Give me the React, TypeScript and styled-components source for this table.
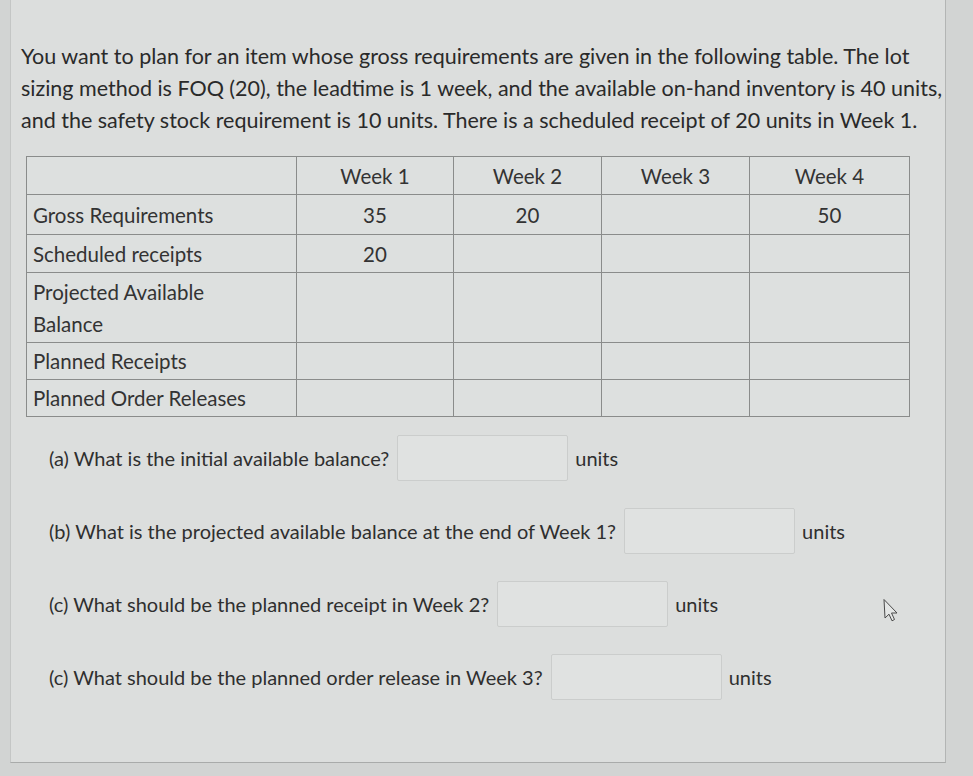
import styled, { createGlobalStyle } from "styled-components";

const GlobalStyle = createGlobalStyle`
  html, body {
    margin: 0;
    padding: 0;
    background: #d2d4d3;
  }
  body {
    font-family: Lato, "Open Sans", sans-serif;
    color: #2c2c2c;
  }
`;

const Page = styled.div`
  width: 973px;
  height: 776px;
  overflow: hidden;
  background: #d2d4d3;
`;

const Panel = styled.section`
  position: relative;
  box-sizing: border-box;
  margin-left: 10px;
  width: 936px;
  height: 763px;
  padding: 40px 0 0 10px;
  background: #dcdedd;
  border-right: 1px solid #b3b5b4;
  border-bottom: 1px solid #a9abaa;
  border-left: 1px solid #c4c6c5;
`;

const Intro = styled.p`
  margin: 0;
  font-size: 21.5px;
  line-height: 32px;
  white-space: nowrap;
  color: #2a2a2a;
`;

const Table = styled.table`
  margin: 20px 0 0 5px;
  border-collapse: collapse;
  font-size: 20.5px;
  color: #333;
  background: #dde0df;
`;

const Cell = styled.td<{ $w?: number; $h?: number; $label?: boolean }>`
  width: ${(p) => (p.$w ? `${p.$w}px` : "auto")};
  height: ${(p) => (p.$h ? `${p.$h}px` : "auto")};
  box-sizing: border-box;
  border: 1px solid #8a8c8b;
  padding: ${(p) => (p.$label ? "0 0 0 6px" : "0")};
  text-align: ${(p) => (p.$label ? "left" : "center")};
  vertical-align: middle;
  line-height: 32px;
  white-space: nowrap;
`;

const Questions = styled.div`
  display: flex;
  flex-direction: column;
  gap: 27px;
  margin: 18px 0 0 28px;
`;

const QRow = styled.div`
  display: flex;
  align-items: center;
  height: 46px;
  font-size: 20px;
  color: #2f2f2f;
  white-space: nowrap;
`;

const Answer = styled.input`
  box-sizing: border-box;
  width: 171px;
  height: 46px;
  margin: 0 7px 0 8px;
  border: 1px solid #cbcdcc;
  border-radius: 2px;
  background: #e0e2e1;
  outline: none;
`;

const Cursor = styled.svg`
  position: absolute;
  left: 871px;
  top: 598px;
  width: 18px;
  height: 25px;
`;

const weeks = ["Week 1", "Week 2", "Week 3", "Week 4"];
const widths = [157, 148, 148, 160];

const rows: { label: React.ReactNode; h: number; values: string[] }[] = [
  { label: "Gross Requirements", h: 40, values: ["35", "20", "", "50"] },
  { label: "Scheduled receipts", h: 38, values: ["20", "", "", ""] },
  {
    label: (
      <>
        Projected Available
        <br />
        Balance
      </>
    ),
    h: 70,
    values: ["", "", "", ""],
  },
  { label: "Planned Receipts", h: 37, values: ["", "", "", ""] },
  { label: "Planned Order Releases", h: 37, values: ["", "", "", ""] },
];

const questions = [
  "(a) What is the initial available balance?",
  "(b) What is the projected available balance at the end of Week 1?",
  "(c) What should be the planned receipt in Week 2?",
  "(c) What should be the planned order release in Week 3?",
];

export default function App() {
  return (
    <Page>
      <GlobalStyle />
      <Panel>
        <Intro>
          You want to plan for an item whose gross requirements are given in the following table. The lot
          <br />
          sizing method is FOQ (20), the leadtime is 1 week, and the available on-hand inventory is 40 units,
          <br />
          and the safety stock requirement is 10 units. There is a scheduled receipt of 20 units in Week 1.
        </Intro>
        <Table>
          <tbody>
            <tr>
              <Cell $w={270} $h={38} $label />
              {weeks.map((w, i) => (
                <Cell key={w} $w={widths[i]}>
                  {w}
                </Cell>
              ))}
            </tr>
            {rows.map((r, i) => (
              <tr key={i}>
                <Cell $h={r.h} $label>
                  {r.label}
                </Cell>
                {r.values.map((v, j) => (
                  <Cell key={j}>{v}</Cell>
                ))}
              </tr>
            ))}
          </tbody>
        </Table>
        <Questions>
          {questions.map((q, i) => (
            <QRow key={i}>
              {q}
              <Answer aria-label={q} />
              units
            </QRow>
          ))}
        </Questions>
        <Cursor viewBox="0 0 18 25">
          <path
            d="M2 1.5 L15 15 L9.5 15 L12.5 21.5 L10 22.8 L7 16.2 L3 20 Z"
            fill="#e4e6e5"
            stroke="#4a4a4a"
            strokeWidth="1"
            strokeLinejoin="round"
          />
        </Cursor>
      </Panel>
    </Page>
  );
}
